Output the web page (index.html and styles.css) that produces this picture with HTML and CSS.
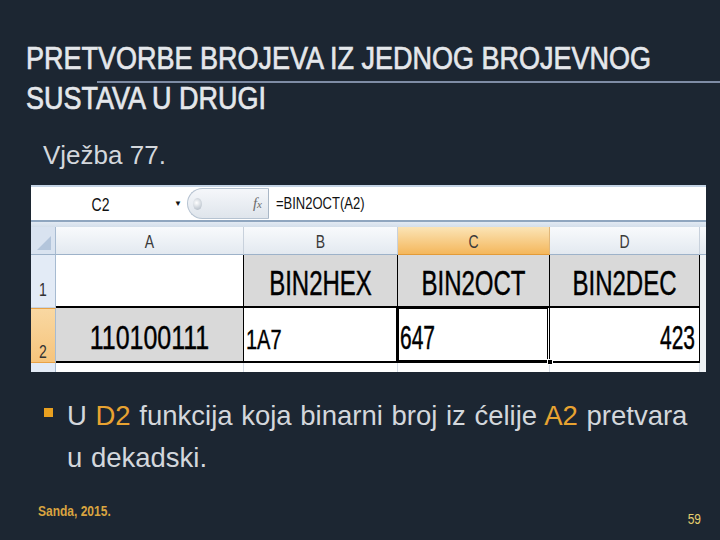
FILE: index.html
```html
<!DOCTYPE html>
<html lang="hr">
<head>
<meta charset="utf-8">
<title>Pretvorbe brojeva</title>
<link rel="stylesheet" href="styles.css">
</head>
<body>
<div class="slide">
  <header class="head">
    <h1 class="title">PRETVORBE BROJEVA IZ JEDNOG BROJEVNOG<br>SUSTAVA U DRUGI</h1>
  </header>
  <p class="sub">Vježba 77.</p>

  <div class="sheet">
    <div class="fbar">
      <div class="namebox"><span class="nb-text tall">C2</span></div>
      <span class="nb-arrow">▼</span>
      <div class="pill"><span class="knob"></span><span class="fx">f<span class="fx-x">x</span></span></div>
      <div class="formula"><span class="tall">=BIN2OCT(A2)</span></div>
    </div>
    <div class="fsep"></div>
    <div class="grid">
      <div class="corner"><span class="tri"></span></div>
      <div class="ch"><span class="tall">A</span></div>
      <div class="ch"><span class="tall">B</span></div>
      <div class="ch ch-sel"><span class="tall">C</span></div>
      <div class="ch"><span class="tall">D</span></div>
      <div class="ch ch-edge"></div>

      <div class="rh rh-1"><span class="tall">1</span></div>
      <div class="cell r1"></div>
      <div class="cell r1 gray big"><span class="t-big">BIN2HEX</span></div>
      <div class="cell r1 gray big"><span class="t-big">BIN2OCT</span></div>
      <div class="cell r1 gray big"><span class="t-big">BIN2DEC</span></div>
      <div class="cell edge"></div>

      <div class="rh rh-2"><span class="tall">2</span></div>
      <div class="cell r2 gray num-c"><span class="t-bin">110100111</span></div>
      <div class="cell r2 num-l"><span class="t-hex">1A7</span></div>
      <div class="cell r2 num-l selected"><span class="t-num">647</span><span class="handle"></span></div>
      <div class="cell r2 num-r"><span class="t-num">423</span></div>
      <div class="cell edge"></div>

      <div class="rh rh-3"></div>
      <div class="cell r3"></div>
      <div class="cell r3"></div>
      <div class="cell r3"></div>
      <div class="cell r3"></div>
      <div class="cell edge"></div>
    </div>
  </div>

  <ul class="bullets">
    <li>U <span class="hl">D2</span> funkcija koja binarni broj iz ćelije <span class="hl">A2</span> pretvara u dekadski.</li>
  </ul>

  <footer class="foot">
    <span class="author">Sanda, 2015.</span>
    <span class="page">59</span>
  </footer>
</div>
</body>
</html>
```

FILE: styles.css
```css
* { box-sizing: border-box; }

html, body {
  margin: 0;
  padding: 0;
  background: #1c2632;
}

.slide {
  width: 720px;
  height: 540px;
  background: #1c2632;
  font-family: "Liberation Sans", Arial, sans-serif;
  overflow: hidden;
}

/* ---------- title ---------- */
.head {
  position: relative;
  padding: 39px 0 0 26px;
  height: 110px;
}

.head::after {
  content: "";
  position: absolute;
  left: 97px;
  right: 0;
  top: 81px;
  height: 2px;
  background: #7e8ca5;
}

.title {
  margin: 0;
  font-size: 27px;
  line-height: 34.5px;
  font-weight: normal;
  color: #e4e7eb;
  -webkit-text-stroke: 0.6px #e4e7eb;
  transform: scaleY(1.15);
  transform-origin: 0 0;
  position: relative;
  z-index: 1;
}

.sub {
  margin: 30px 0 0 43px;
  font-size: 26px;
  line-height: 30px;
  color: #d3d7dc;
}

/* ---------- spreadsheet picture ---------- */
.sheet {
  margin: 15px 0 0 31px;
  width: 675px;
  height: 187px;
  background: #ffffff;
  font-family: "Liberation Sans", Arial, sans-serif;
  color: #000;
  overflow: hidden;
}

.tall {
  display: inline-block;
  transform: scaleY(1.3);
}

.fbar {
  height: 35px;
  border-top: 2px solid #c3d3e5;
  background: #ffffff;
  display: flex;
  align-items: stretch;
}

.namebox {
  width: 139px;
  display: flex;
  align-items: center;
  justify-content: center;
  font-size: 14px;
  color: #111;
  padding-top: 1px;
}

.nb-arrow {
  width: 17px;
  font-size: 8px;
  color: #111;
  display: flex;
  align-items: center;
  padding-left: 4px;
}

.pill {
  width: 82px;
  margin: 1px 0 1px 0;
  border: 1px solid #b6c3d1;
  border-right: 1px solid #a9b7c6;
  border-radius: 16px 0 0 16px;
  background: linear-gradient(#f5f7fa, #dfe5ec);
  display: flex;
  align-items: center;
  justify-content: space-between;
  padding: 0 5px 0 5px;
}

.knob {
  width: 9px;
  height: 12px;
  border-radius: 50%;
  background: radial-gradient(circle at 40% 40%, #ffffff 0%, #c9d0d8 60%, #aab3bd 100%);
}

.fx {
  font-family: "Liberation Serif", "Times New Roman", serif;
  font-style: italic;
  font-size: 15px;
  color: #6b6b6b;
  padding-right: 1px;
}

.fx-x {
  font-size: 11px;
}

.formula {
  flex: 1;
  display: flex;
  align-items: center;
  padding-left: 7px;
  font-size: 13px;
  color: #111;
}

.fsep {
  height: 7px;
  border-top: 2px solid #8fa6bf;
  background: linear-gradient(#e2eaf3, #d3deea);
}

.grid {
  display: grid;
  grid-template-columns: 25px 188px 154px 152px 150px 6px;
  grid-template-rows: 28px 53px 55px 9px;
}

.corner {
  position: relative;
  background: #d9e3f0;
  border-right: 1px solid #a7bbd1;
  border-bottom: 1px solid #9db2c9;
}

.tri {
  position: absolute;
  right: 4px;
  bottom: 4px;
  width: 14px;
  height: 14px;
  background: #b3c5db;
  clip-path: polygon(100% 0, 100% 100%, 0 100%);
}

.ch {
  background: linear-gradient(#f8fafc, #e3e9f0);
  border-right: 1px solid #c8d1dc;
  border-bottom: 1px solid #9db2c9;
  display: flex;
  align-items: center;
  justify-content: center;
  font-size: 14px;
  color: #3a3a3a;
}

.ch-sel {
  background: linear-gradient(#fbe4b6, #f4b75c);
  border-bottom: 1px solid #e39b38;
  border-right: 1px solid #e0b77a;
}

.ch-edge {
  border-right: none;
}

.rh {
  background: #e3ebf6;
  border-right: 1px solid #a7bbd1;
  border-bottom: 1px solid #c7d3e2;
  display: flex;
  align-items: flex-end;
  justify-content: center;
  font-size: 14px;
  color: #333;
}

.rh-1 { padding-bottom: 10px; }

.rh-2 {
  background: linear-gradient(#f9d8a2, #f6c47c);
  border-top: 1px solid #e9a347;
  border-bottom: 1px solid #e9a347;
  padding-bottom: 3px;
}

.rh-3 { border-bottom: none; }

.cell {
  position: relative;
  background: #ffffff;
  border-right: 1px solid #000;
  display: flex;
  align-items: center;
}

.r1 { border-bottom: 2px solid #000; }
.r2 { border-bottom: 2px solid #000; }
.r3 { border-right: 1px solid #d5dce6; }

.gray { background: #d9d9d9; }

.big {
  justify-content: center;
  padding-top: 4px;
}

.t-big {
  display: inline-block;
  font-size: 24px;
  transform: scaleY(1.45);
  -webkit-text-stroke: 0.3px #000;
}

.num-c {
  justify-content: center;
  padding-top: 6px;
}

.num-l {
  justify-content: flex-start;
  padding-left: 2px;
  padding-top: 6px;
}

.num-r {
  justify-content: flex-end;
  padding-right: 4px;
  padding-top: 6px;
}

.t-bin {
  display: inline-block;
  font-size: 25px;
  transform: scaleY(1.35);
  -webkit-text-stroke: 0.3px #000;
}

.t-hex {
  display: inline-block;
  font-size: 20px;
  transform: scaleY(1.35);
  padding-top: 3px;
  -webkit-text-stroke: 0.3px #000;
}

.t-num {
  display: inline-block;
  font-size: 21px;
  transform: scaleY(1.55);
  -webkit-text-stroke: 0.3px #000;
}

.selected::after {
  content: "";
  position: absolute;
  left: -2px;
  top: -2px;
  right: -1px;
  bottom: -2px;
  border: 3px double #000;
  pointer-events: none;
}

.handle {
  position: absolute;
  right: -4px;
  bottom: -4px;
  width: 6px;
  height: 6px;
  background: #000;
  border: 1px solid #fff;
  z-index: 2;
}

.edge {
  background: #eef1f4;
  border-right: none;
  border-bottom: none;
}

/* ---------- bullet ---------- */
.bullets {
  list-style: none;
  margin: 23px 0 0 0;
  padding: 0 20px 0 67px;
}

.bullets li {
  position: relative;
  font-size: 27.5px;
  line-height: 42px;
  word-spacing: 1px;
  color: #d3d7dc;
}

.bullets li::before {
  content: "";
  position: absolute;
  left: -23px;
  top: 13px;
  width: 9px;
  height: 9px;
  background: #e8a020;
}

.hl { color: #e8a331; }

/* ---------- footer ---------- */
.foot {
  display: flex;
  justify-content: space-between;
  align-items: flex-start;
  margin-top: 25px;
  padding: 0 19px 0 38px;
}

.author {
  font-size: 12px;
  line-height: 14px;
  font-weight: bold;
  color: #d9a440;
  display: inline-block;
  transform: scaleY(1.15);
}

.page {
  font-size: 12px;
  line-height: 14px;
  color: #e6cf6e;
  display: inline-block;
  margin-top: 8px;
  transform: scaleY(1.15);
}
```
